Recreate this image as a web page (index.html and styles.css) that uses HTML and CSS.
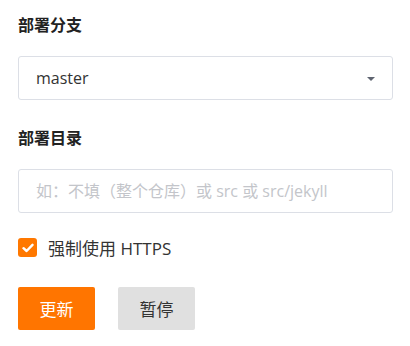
FILE: index.html
```html
<!DOCTYPE html>
<html>
<head>
	<title>部署设置</title>
	<link rel="stylesheet" href="styles.css">
</head>
<body>
	<form class="deploy-form">
		<div class="field">
			<label class="field-label">部署分支</label>
			<div class="select-box">
				<span class="select-value">master</span>
				<span class="caret"></span>
			</div>
		</div>
		<div class="field">
			<label class="field-label">部署目录</label>
			<input class="text-input" type="text" placeholder="如：不填（整个仓库）或 src 或 src/jekyll">
		</div>
		<label class="check-row">
			<span class="check-box">
				<svg width="12" height="10" viewBox="0 0 12 10"><path d="M1.5 5.2 L4.6 8 L10.5 1.8" fill="none" stroke="#fff" stroke-width="2.4" stroke-linecap="round" stroke-linejoin="round"/></svg>
			</span>
			<span class="check-text">强制使用 HTTPS</span>
		</label>
		<div class="actions">
			<button type="button" class="btn btn-primary">更新</button>
			<button type="button" class="btn btn-default">暂停</button>
		</div>
	</form>
</body>
</html>
```

FILE: styles.css
```css
body {
	margin: 0;
	background-color: #fff;
	font-family: "Open Sans", "Noto Sans CJK SC", sans-serif;
	color: #333;
}

.deploy-form {
	width: 375px;
	padding: 13px 18px 0;
}

.field {
	display: flex;
	flex-direction: column;
}

.field-label {
	font-size: 16px;
	font-weight: bold;
	line-height: 24px;
	color: #222;
	margin-bottom: 19px;
}

.field + .field {
	margin-top: 26px;
}

.select-box {
	box-sizing: border-box;
	height: 44px;
	border: 1px solid #dcdfe6;
	border-radius: 3px;
	display: flex;
	align-items: center;
	justify-content: space-between;
	padding: 0 17px 0 17px;
}

.select-value {
	font-size: 16px;
	color: #333;
}

.caret {
	width: 0;
	height: 0;
	border-left: 4px solid transparent;
	border-right: 4px solid transparent;
	border-top: 4px solid #5f6470;
	margin-top: 2px;
}

.text-input {
	box-sizing: border-box;
	height: 44px;
	width: 100%;
	border: 1px solid #dcdfe6;
	border-radius: 3px;
	padding: 0 17px;
	font-family: inherit;
	font-size: 16px;
	outline: none;
}

.text-input::placeholder {
	color: #c3c5ca;
}

.check-row {
	display: flex;
	align-items: center;
	gap: 11px;
	margin-top: 25px;
	height: 19px;
}

.check-box {
	width: 19px;
	height: 19px;
	border-radius: 3px;
	background-color: #ff7800;
	display: flex;
	align-items: center;
	justify-content: center;
}

.check-text {
	font-size: 17px;
	color: #333;
}

.actions {
	display: flex;
	gap: 23px;
	margin-top: 30px;
}

.btn {
	width: 77px;
	height: 43px;
	border: none;
	border-radius: 2px;
	font-family: inherit;
	font-size: 17px;
	cursor: pointer;
}

.btn-primary {
	background-color: #ff7500;
	color: #fff;
}

.btn-default {
	background-color: #e0e0e0;
	color: #333;
}
```
